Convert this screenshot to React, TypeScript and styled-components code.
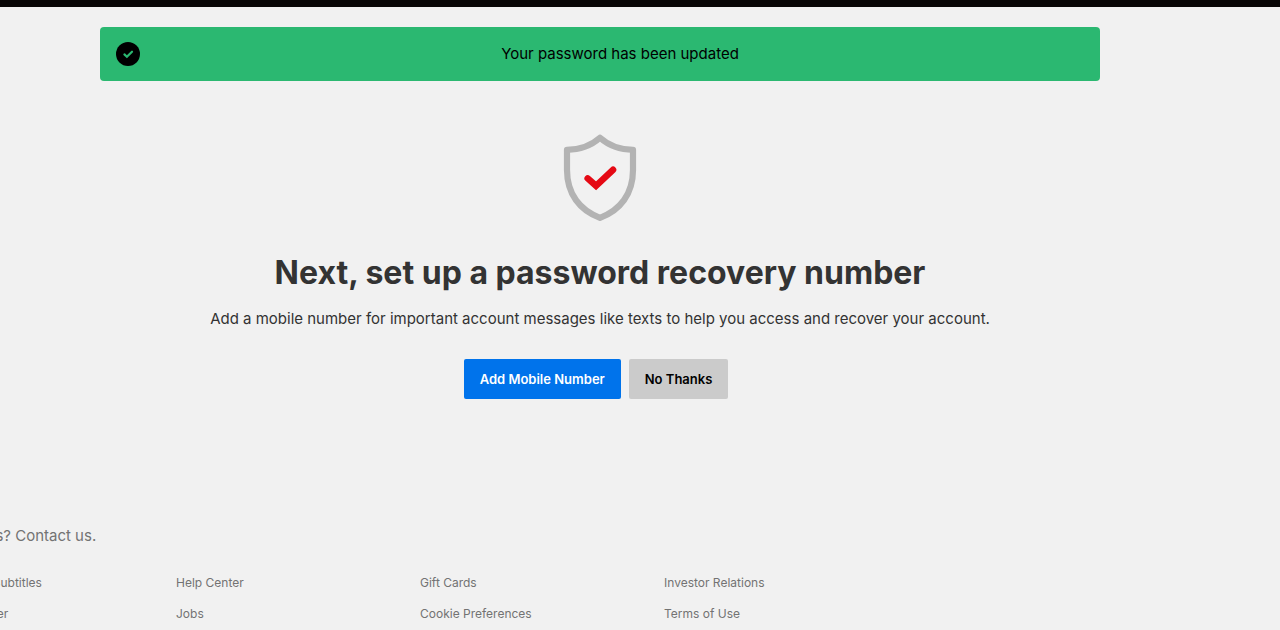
import React from "react";
import styled, { createGlobalStyle } from "styled-components";

const GlobalStyle = createGlobalStyle`
  *, *::before, *::after { box-sizing: border-box; }
  body {
    margin: 0;
    overflow: hidden;
    background: #f1f1f1;
    color: #333;
    font-family: Inter, "Liberation Sans", sans-serif;
    font-size: 15px;
    line-height: 24px;
  }
`;

const TopBar = styled.header`
  height: 7px;
  background: #080606;
`;

const Main = styled.main`
  padding: 20px 180px 0 100px;
`;

const Banner = styled.div`
  display: flex;
  align-items: center;
  min-height: 54px;
  padding-left: 16px;
  border-radius: 4px;
  background: #2bb871;
  color: #000;
`;

const BannerText = styled.p`
  flex: 1;
  margin: 0;
  text-align: center;
`;

const Content = styled.section`
  display: flex;
  flex-direction: column;
  align-items: center;
  padding-top: 52px;
  text-align: center;
`;

const Title = styled.h1`
  margin: 30px 0 0;
  font-size: 32px;
  font-weight: 700;
  line-height: 44px;
  white-space: nowrap;
`;

const Lead = styled.p`
  margin: 12px 0 0;
  white-space: nowrap;
`;

const Actions = styled.div`
  display: flex;
  gap: 8px;
  margin: 28px 8px 0 0;
`;

const Button = styled.button<{ $primary?: boolean }>`
  height: 40px;
  padding: 0 16px;
  border: 0;
  border-radius: 2px;
  background: ${(p) => (p.$primary ? "#0073eb" : "#cbcbcb")};
  color: ${(p) => (p.$primary ? "#fff" : "#000")};
  font: 600 13px/20px Inter, "Liberation Sans", sans-serif;
  cursor: pointer;
`;

const Footer = styled.footer`
  margin: 125px 0 0 -68px;
  color: #737373;
`;

const FooterLink = styled.a`
  color: inherit;
  text-decoration: none;
  &:hover { text-decoration: underline; }
`;

const FooterLinks = styled.ul`
  display: grid;
  grid-template-columns: repeat(4, 244px);
  row-gap: 11px;
  margin: 25px 0 0;
  padding: 0;
  list-style: none;
  font-size: 12px;
  line-height: 20px;
`;

const links = [
  "Audio and Subtitles",
  "Help Center",
  "Gift Cards",
  "Investor Relations",
  "Media Center",
  "Jobs",
  "Cookie Preferences",
  "Terms of Use",
];

const SuccessIcon = () => (
  <svg width="24" height="24" viewBox="0 0 24 24" aria-hidden="true">
    <circle cx="12" cy="12" r="12" fill="#000" />
    <path
      d="M8.4 12.4L10.9 14.7L16 9.7"
      fill="none"
      stroke="#2bb871"
      strokeWidth="2.2"
      strokeLinecap="round"
    />
  </svg>
);

const ShieldIcon = () => (
  <svg width="74" height="88" viewBox="0 0 74 88" fill="none" aria-hidden="true">
    <path
      d="M37 4.8C29.5 11.5 19 16.8 4 16.8V37C4 61 17 77.5 37 84.8C57 77.5 70 61 70 37V16.8C55 16.8 44.5 11.5 37 4.8Z"
      stroke="#b3b3b3"
      strokeWidth="6.2"
      strokeLinejoin="round"
    />
    <path d="M24.7 45.4L33 52.8L50 36.8" stroke="#e50914" strokeWidth="6.6" strokeLinecap="round" />
  </svg>
);

export default function App() {
  return (
    <>
      <GlobalStyle />
      <TopBar />
      <Main>
        <Banner role="status">
          <SuccessIcon />
          <BannerText>Your password has been updated</BannerText>
        </Banner>
        <Content>
          <ShieldIcon />
          <Title>Next, set up a password recovery number</Title>
          <Lead>
            Add a mobile number for important account messages like texts to help you access and
            recover your account.
          </Lead>
          <Actions>
            <Button type="button" $primary>Add Mobile Number</Button>
            <Button type="button">No Thanks</Button>
          </Actions>
        </Content>
      </Main>
      <Footer>
        <FooterLink href="#contact">Questions? Contact us.</FooterLink>
        <FooterLinks>
          {links.map((label) => (
            <li key={label}>
              <FooterLink href="#">{label}</FooterLink>
            </li>
          ))}
        </FooterLinks>
      </Footer>
    </>
  );
}
